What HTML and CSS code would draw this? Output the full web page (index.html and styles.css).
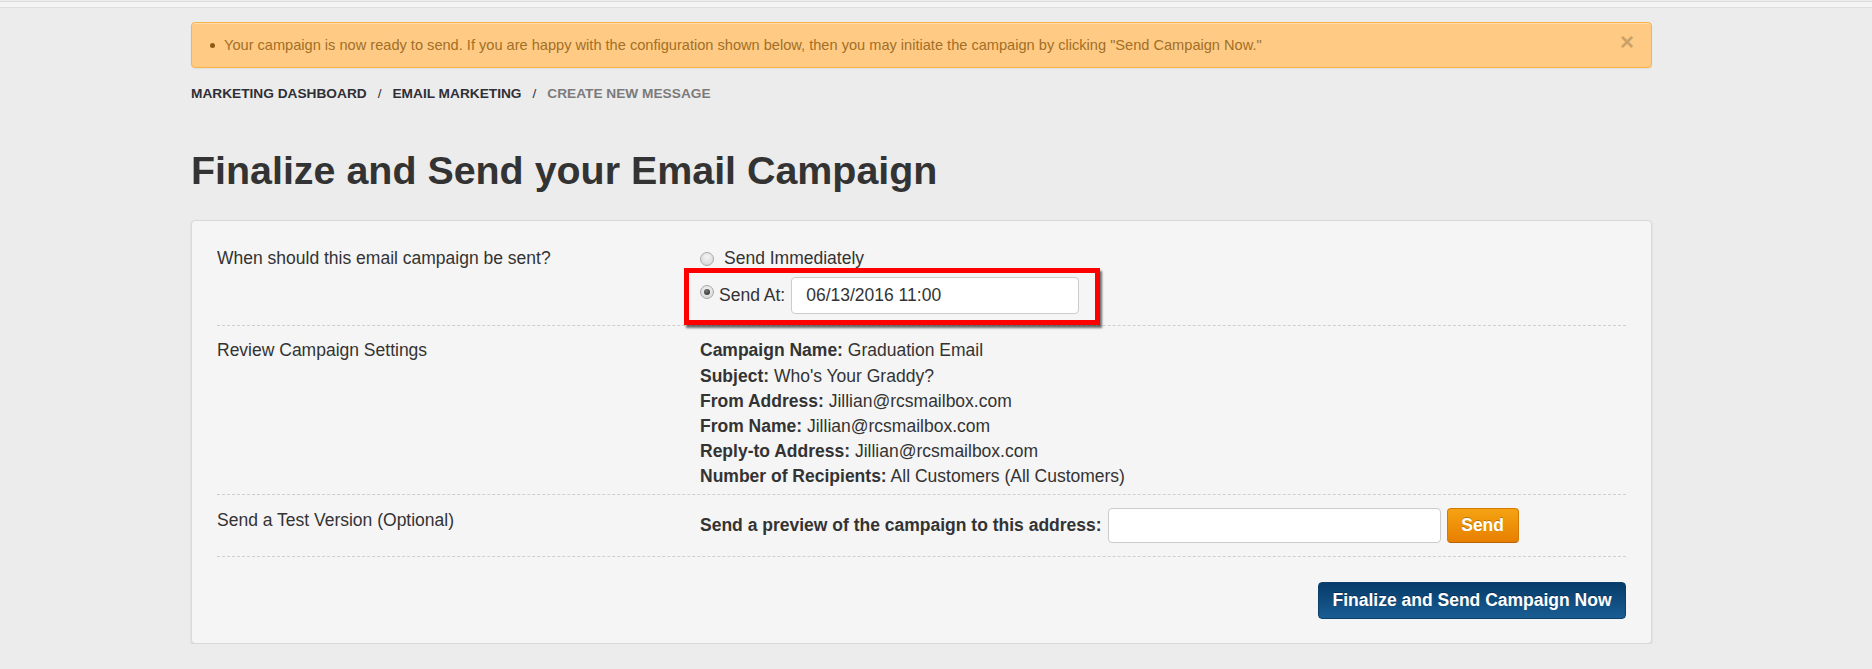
FILE: index.html
```html
<!DOCTYPE html>
<html>
<head>
<meta charset="utf-8">
<title>Finalize and Send your Email Campaign</title>
<link rel="stylesheet" href="styles.css">
</head>
<body>
<div class="topbar"></div>
<div class="container">
  <div class="alert">
    <span class="dot"></span>
    <span class="alert-text">Your campaign is now ready to send. If you are happy with the configuration shown below, then you may initiate the campaign by clicking "Send Campaign Now."</span>
    <span class="close">×</span>
  </div>
  <nav class="crumbs">
    <span class="crumb">MARKETING DASHBOARD</span>
    <span class="sep">/</span>
    <span class="crumb">EMAIL MARKETING</span>
    <span class="sep">/</span>
    <span class="crumb current">CREATE NEW MESSAGE</span>
  </nav>
  <h1 class="title">Finalize and Send your Email Campaign</h1>
  <div class="card">
    <div class="row row-when">
      <div class="label">When should this email campaign be sent?</div>
      <div class="value">
        <div class="opt opt-now"><span class="radio"></span><span class="opt-text">Send Immediately</span></div>
        <div class="opt opt-at">
          <span class="radio checked"></span><span class="opt-text">Send At:</span>
          <input class="field field-date" type="text" value="06/13/2016 11:00">
          <span class="highlight"></span>
        </div>
      </div>
    </div>
    <div class="row row-review">
      <div class="label">Review Campaign Settings</div>
      <div class="value">
        <div class="line"><b>Campaign Name:</b> Graduation Email</div>
        <div class="line"><b>Subject:</b> Who's Your Graddy?</div>
        <div class="line"><b>From Address:</b> Jillian@rcsmailbox.com</div>
        <div class="line"><b>From Name:</b> Jillian@rcsmailbox.com</div>
        <div class="line"><b>Reply-to Address:</b> Jillian@rcsmailbox.com</div>
        <div class="line"><b>Number of Recipients:</b> All Customers (All Customers)</div>
      </div>
    </div>
    <div class="row row-test">
      <div class="label">Send a Test Version (Optional)</div>
      <div class="value test-line">
        <b>Send a preview of the campaign to this address:</b>
        <input class="field field-test" type="text" value="">
        <button class="btn btn-send">Send</button>
      </div>
    </div>
    <div class="footer">
      <button class="btn btn-final">Finalize and Send Campaign Now</button>
    </div>
  </div>
</div>
</body>
</html>
```

FILE: styles.css
```css
html, body {
  margin: 0;
  padding: 0;
}
body {
  background: #ececec;
  font-family: "Liberation Sans", Arial, sans-serif;
  color: #333;
}
.topbar {
  height: 5px;
  background: #f4f4f4;
  border-top: 1px solid #dcdcdc;
  border-bottom: 1px solid #dedede;
  margin-top: 1px;
}
.container {
  width: 1461px;
  margin-left: 191px;
  padding-top: 14px;
}
.alert {
  display: flex;
  align-items: center;
  height: 44px;
  background: #ffcb84;
  border: 1px solid #f9b347;
  border-radius: 4px;
  box-shadow: inset 0 1px 0 rgba(255,255,255,0.35), 0 1px 2px rgba(0,0,0,0.06);
  padding: 0 0 0 18px;
  color: #a26f28;
  font-size: 14.6px;
}
.dot {
  width: 5px;
  height: 5px;
  border-radius: 50%;
  background: #8c5a14;
  margin-right: 9px;
  flex: none;
}
.alert-text {
  flex: 1;
}
.close {
  font-weight: bold;
  font-size: 24px;
  color: #cba16a;
  margin-right: 17px;
  margin-top: -6px;
  line-height: 1;
}
.crumbs {
  display: flex;
  align-items: center;
  margin-top: 16px;
  font-size: 13.7px;
  font-weight: bold;
  line-height: 20px;
  color: #2f2f36;
}
.sep {
  margin: 0 11px;
  font-weight: normal;
}
.crumb.current {
  color: #7b7b7b;
}
.title {
  margin: 45px 0 0;
  font-size: 39.4px;
  line-height: 1.1;
  font-weight: bold;
  color: #333;
}
.card {
  margin-top: 28px;
  background: #f5f5f5;
  border: 1px solid #d9d9d9;
  border-radius: 4px;
  box-shadow: 0 1px 2px rgba(0,0,0,0.12);
  padding: 13px 25px 11px;
  font-size: 17.5px;
  line-height: 25.1px;
}
.row {
  display: grid;
  grid-template-columns: 483px 1fr;
  border-bottom: 1px dashed #cfcfcf;
}
.row-when {
  padding: 12px 0 11px;
}
.row-review {
  padding: 12px 0 5px;
}
.row-test {
  padding: 13px 0 13px;
}
.value b {
  font-weight: bold;
}
.opt {
  display: flex;
  align-items: center;
}
.opt-now .opt-text {
  margin-left: 10px;
}
.opt-at {
  position: relative;
  margin-top: 6px;
  width: 380px;
}
.opt-at .opt-text {
  margin-left: 5px;
  margin-right: 6px;
}
.radio {
  width: 12px;
  height: 12px;
  border-radius: 50%;
  border: 1px solid #a9a9a9;
  background: radial-gradient(circle at 50% 35%, #f4f4f4 0%, #dcdcdc 70%, #cfcfcf 100%);
  flex: none;
  position: relative;
}
.radio.checked {
  margin-top: -8px;
}
.radio.checked::after {
  content: "";
  position: absolute;
  left: 3px;
  top: 3px;
  width: 6px;
  height: 6px;
  border-radius: 50%;
  background: radial-gradient(circle at 40% 35%, #777 0%, #333 80%);
}
.field {
  font-family: "Liberation Sans", Arial, sans-serif;
  font-size: 17.5px;
  color: #333;
  background: #fff;
  border: 1px solid #cccccc;
  border-radius: 4px;
  box-sizing: border-box;
  padding: 0 14px;
  outline: none;
}
.field-date {
  width: 288px;
  height: 37px;
}
.highlight {
  position: absolute;
  left: -16px;
  top: -9px;
  width: 416px;
  height: 57px;
  box-sizing: border-box;
  border: 5px solid #ff0000;
  box-shadow: 2px 3px 2px rgba(0,0,0,0.55);
  pointer-events: none;
}
.test-line {
  display: flex;
  align-items: center;
}
.field-test {
  width: 333px;
  height: 35px;
  margin-left: 6px;
}
.btn {
  font-family: "Liberation Sans", Arial, sans-serif;
  font-weight: bold;
  font-size: 17.5px;
  color: #fff;
  border-radius: 4px;
  cursor: pointer;
  box-sizing: border-box;
}
.btn-send {
  width: 72px;
  height: 35px;
  margin-left: 6px;
  padding: 0;
  background: linear-gradient(#f5a312, #e77f00);
  border: 1px solid #d67800;
  border-bottom-color: #b96300;
  text-shadow: 0 -1px 0 rgba(0,0,0,0.25);
}
.footer {
  display: flex;
  justify-content: flex-end;
  padding: 25px 0 13px;
}
.btn-final {
  width: 308px;
  height: 37px;
  padding: 0;
  background: linear-gradient(#063b69, #1a5d93);
  border: 1px solid #0b3f6c;
  text-shadow: 0 -1px 0 rgba(0,0,0,0.3);
}
```
